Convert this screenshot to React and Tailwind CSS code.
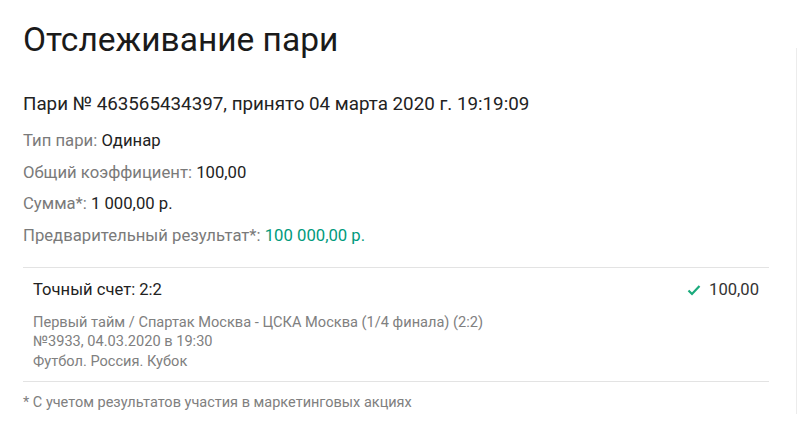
import React from "react";

export default function App() {
  return (
    <div className="w-[800px] h-[428px] bg-white relative overflow-hidden" style={{ fontFamily: "Roboto, 'Noto Sans', sans-serif" }}>
      <div className="absolute right-[3px] top-[48px] bottom-[14px] w-px bg-[#ececec]" />
      <div className="pl-[23px] pr-[31px] pt-[20px]">
        <h1 className="text-[33.5px] leading-[40px] text-[#1a1a1a] font-normal">Отслеживание пари</h1>
        <div className="mt-[32px] text-[18.8px] leading-[24px] text-[#222]">
          Пари № 463565434397, принято 04 марта 2020 г. 19:19:09
        </div>
        <div className="mt-[9px] flex flex-col text-[16.7px] leading-[31.7px] text-[#7a7a7a]">
          <div>Тип пари: <span className="text-[#222]">Одинар</span></div>
          <div>Общий коэффициент: <span className="text-[#222]">100,00</span></div>
          <div>Сумма*: <span className="text-[#222]">1 000,00 р.</span></div>
          <div>Предварительный результат*: <span className="text-[#009a7c]">100 000,00 р.</span></div>
        </div>
        <div className="mt-[15px] border-t border-[#e3e3e3] pl-[10px] pr-[10px] pt-[12px] pb-[10px]">
          <div className="flex justify-between items-center text-[16.6px] leading-[20px] text-[#222]">
            <span>Точный счет: 2:2</span>
            <span className="flex items-center gap-[8px]">
              <svg width="14" height="12" viewBox="0 0 14 12"><path d="M1.5 6.5 L5 10 L12.5 2" fill="none" stroke="#1aaa7c" strokeWidth="2.2" /></svg>
              <span className="text-[#333]">100,00</span>
            </span>
          </div>
          <div className="mt-[13px] text-[14.6px] leading-[19.5px] text-[#808080]">
            <div>Первый тайм / Спартак Москва - ЦСКА Москва (1/4 финала) (2:2)</div>
            <div>№3933, 04.03.2020 в 19:30</div>
            <div>Футбол. Россия. Кубок</div>
          </div>
        </div>
        <div className="border-t border-[#e3e3e3] pt-[12px] text-[14.5px] leading-[18px] text-[#808080]">
          * С учетом результатов участия в маркетинговых акциях
        </div>
      </div>
    </div>
  );
}
